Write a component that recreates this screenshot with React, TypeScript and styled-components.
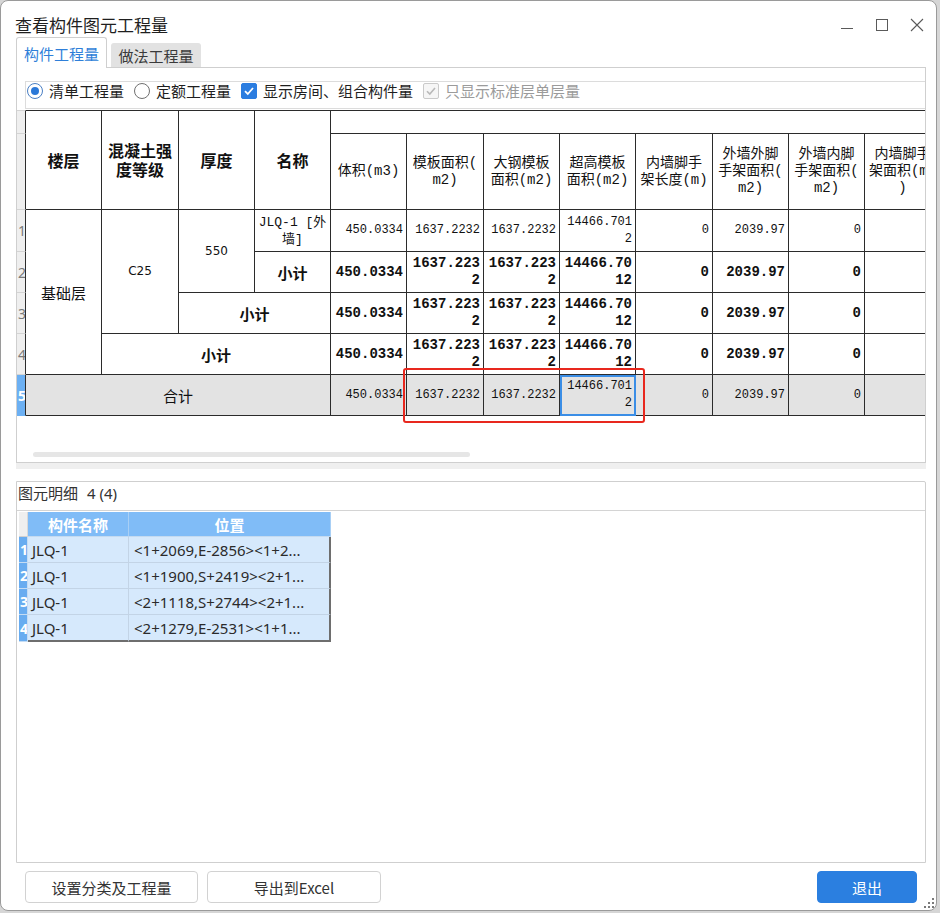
import React from "react";
import styled, { createGlobalStyle, css } from "styled-components";

const UI_FONT = `"Noto Sans CJK SC", "Noto Sans", sans-serif`;
const GRID_FONT = `"Liberation Mono", "Noto Sans CJK SC", monospace`;
const LATIN_FONT = `"Noto Sans", "Noto Sans CJK SC", sans-serif`;
const LINE = "#2b2b2b";

const GlobalStyle = createGlobalStyle`
  html, body { margin: 0; padding: 0; background: #d6d6d6; }
  body { font-family: ${UI_FONT}; }
  *, *::before, *::after { box-sizing: border-box; }
`;

const Window = styled.div`
  position: relative;
  width: 937px;
  height: 911px;
  background: #ffffff;
  border: 1px solid #9a9a9a;
  border-radius: 8px;
  display: flex;
  flex-direction: column;
  overflow: hidden;
  font-family: ${UI_FONT};
`;

const TitleBar = styled.div`
  height: 36px;
  flex: none;
  display: flex;
  align-items: center;
  padding: 12px 2px 0 14px;
`;

const Title = styled.div`
  font-size: 17px;
  line-height: 24px;
  color: #1f1f1f;
`;

const Controls = styled.div`
  margin-left: auto;
  display: flex;
`;

const CtrlButton = styled.div`
  width: 35px;
  height: 24px;
  display: flex;
  align-items: center;
  justify-content: center;
`;

const TabStrip = styled.div`
  height: 30px;
  flex: none;
  display: flex;
  align-items: flex-end;
  padding-left: 15px;
  position: relative;
  z-index: 1;
`;

const Tab = styled.div<{ $active?: boolean }>`
  display: flex;
  align-items: center;
  justify-content: center;
  font-size: 15px;
  border-radius: 3px 3px 0 0;
  ${(p) =>
    p.$active
      ? css`
          width: 91px;
          height: 31px;
          margin-bottom: -1px;
          background: #ffffff;
          border: 1px solid #cfcfcf;
          border-bottom: none;
          color: #2f7fd9;
        `
      : css`
          width: 90px;
          height: 24px;
          margin-left: 4px;
          background: #e2e2e2;
          color: #3a3a3a;
        `}
`;

const UpperPanel = styled.div`
  flex: none;
  height: 396px;
  margin: 0 10px 0 15px;
  border: 1px solid #cfcfcf;
  padding-top: 13px;
  display: flex;
  flex-direction: column;
`;

const Toolbar = styled.div`
  flex: none;
  height: 28px;
  margin-left: 8px;
  border: 1px solid #dcdcdc;
  border-right: none;
  padding-left: 1px;
  display: flex;
  align-items: flex-start;
`;

const Option = styled.label<{ $disabled?: boolean }>`
  display: flex;
  align-items: center;
  gap: 6px;
  height: 18px;
  margin-right: 10px;
  font-size: 15px;
  line-height: 18px;
  color: ${(p) => (p.$disabled ? "#9b9b9b" : "#1f1f1f")};
  white-space: nowrap;
`;

const RadioMark = styled.span<{ $checked?: boolean }>`
  width: 16px;
  height: 16px;
  border-radius: 50%;
  border: 1px solid ${(p) => (p.$checked ? "#4a7fc4" : "#707070")};
  background: #ffffff;
  display: flex;
  align-items: center;
  justify-content: center;
  &::after {
    content: "";
    width: 8px;
    height: 8px;
    border-radius: 50%;
    background: ${(p) => (p.$checked ? "#2a78d8" : "transparent")};
  }
`;

const CheckMark = styled.span<{ $disabled?: boolean }>`
  width: 16px;
  height: 16px;
  border-radius: 2px;
  display: flex;
  align-items: center;
  justify-content: center;
  background: ${(p) => (p.$disabled ? "#f6f6f6" : "#2b7de0")};
  border: 1px solid ${(p) => (p.$disabled ? "#cacaca" : "#2b7de0")};
`;

const GridArea = styled.div`
  flex: 1;
  display: flex;
  flex-direction: column;
  padding-top: 1px;
  min-height: 0;
`;

const TableClip = styled.div`
  flex: none;
  width: 100%;
  overflow: hidden;
`;

const GridTable = styled.table`
  border-collapse: separate;
  border-spacing: 0;
  table-layout: fixed;
  width: 924px;
`;

const GridRow = styled.tr<{ $h: number }>`
  height: ${(p) => p.$h}px;
`;

const RowHead = styled.td<{ $selected?: boolean; $top?: boolean }>`
  padding: 0 0 0 1px;
  background: ${(p) => (p.$selected ? "#6cb0f3" : "#efefef")};
  border-right: 1px solid ${LINE};
  border-bottom: 1px solid ${(p) => (p.$selected ? "#6cb0f3" : "#d4d4d4")};
  border-top: ${(p) => (p.$top ? "1px solid #d4d4d4" : "none")};
  color: ${(p) => (p.$selected ? "#ffffff" : "#7a7a7a")};
  font-family: ${LATIN_FONT};
  font-size: 14px;
  font-weight: ${(p) => (p.$selected ? 700 : 400)};
  vertical-align: middle;
  overflow: hidden;
`;

const HeadCell = styled.th<{ $bold?: boolean; $top?: boolean }>`
  border-right: 1px solid ${LINE};
  border-bottom: 1px solid ${LINE};
  border-top: ${(p) => (p.$top ? `1px solid ${LINE}` : "none")};
  padding: 0 2px;
  text-align: center;
  vertical-align: middle;
  font-family: ${(p) => (p.$bold ? UI_FONT : GRID_FONT)};
  font-size: ${(p) => (p.$bold ? "16px" : "14px")};
  font-weight: ${(p) => (p.$bold ? 700 : 400)};
  line-height: ${(p) => (p.$bold ? "19px" : "17px")};
  color: #111111;
  white-space: nowrap;
  overflow: hidden;
`;

const Line = styled.span`
  display: block;
`;

type Kind = "num" | "numBold" | "label" | "labelBold" | "code" | "name";

const kindStyles: Record<Kind, ReturnType<typeof css>> = {
  num: css`
    font-family: ${GRID_FONT};
    font-size: 12px;
    text-align: right;
  `,
  numBold: css`
    font-family: ${GRID_FONT};
    font-size: 14px;
    font-weight: 700;
    text-align: right;
  `,
  label: css`
    font-family: ${UI_FONT};
    font-size: 15px;
    text-align: center;
  `,
  labelBold: css`
    font-family: ${UI_FONT};
    font-size: 15px;
    font-weight: 700;
    text-align: center;
  `,
  code: css`
    font-family: "DejaVu Sans", sans-serif;
    font-size: 12px;
    text-align: center;
  `,
  name: css`
    font-family: ${GRID_FONT};
    font-size: 13px;
    text-align: center;
  `,
};

const DataCell = styled.td<{ $kind: Kind; $total?: boolean; $selected?: boolean }>`
  border-right: 1px solid ${LINE};
  border-bottom: 1px solid ${LINE};
  padding: 0 3px;
  vertical-align: middle;
  line-height: 17px;
  color: #111111;
  word-break: break-all;
  overflow: hidden;
  background: ${(p) => (p.$total ? "#e3e3e3" : "#ffffff")};
  ${(p) => kindStyles[p.$kind]}
  ${(p) =>
    p.$selected &&
    css`
      outline: 2px solid #3b8ee6;
      outline-offset: -2px;
    `}
`;

const Spacer = styled.div`
  flex: 1;
`;

const ScrollThumb = styled.div`
  flex: none;
  width: 437px;
  height: 5px;
  margin: 0 0 5px 16px;
  border-radius: 3px;
  background: #e6e6e6;
`;

const Splitter = styled.div`
  flex: none;
  height: 6px;
  margin: 0 10px 0 15px;
  background: #efefef;
`;

const Gap = styled.div`
  flex: none;
  height: 12px;
`;

const LowerPanel = styled.div`
  flex: none;
  height: 382px;
  margin: 0 10px 0 15px;
  border: 1px solid #cfcfcf;
  border-radius: 0 2px 0 0;
  display: flex;
  flex-direction: column;
`;

const PanelLabel = styled.div`
  flex: none;
  height: 29px;
  padding: 1px 0 0 1px;
  border-bottom: 1px solid #d4d4d4;
  font-size: 15px;
  line-height: 20px;
  color: #333333;
  display: flex;
`;

const LabelCount = styled.span`
  margin-left: 9px;
  font-family: ${LATIN_FONT};
`;

const DetailTable = styled.table`
  margin: 1px 0 0 2px;
  border-collapse: separate;
  border-spacing: 0;
  table-layout: fixed;
  width: 312px;
`;

const DetailRow = styled.tr<{ $h: number }>`
  height: ${(p) => p.$h}px;
`;

const DetailCorner = styled.td`
  background: #efefef;
  border-right: 1px solid #d9d9d9;
  border-bottom: 1px solid #d0d0d0;
  padding: 0;
`;

const DetailHead = styled.th`
  background: #80bcf7;
  border-right: 1px solid #a8cff5;
  border-bottom: 1px solid #c4daf0;
  color: #ffffff;
  font-size: 15px;
  font-weight: 700;
  text-align: center;
  vertical-align: middle;
  padding: 0;
`;

const DetailRowHead = styled.td`
  background: #68acf0;
  border-right: 1px solid #c5dcf3;
  border-bottom: 1px solid #c5dcf3;
  color: #ffffff;
  font-family: ${LATIN_FONT};
  font-size: 14px;
  font-weight: 700;
  padding: 0 0 0 1px;
  vertical-align: middle;
  overflow: hidden;
`;

const DetailCell = styled.td<{ $lastCol?: boolean; $lastRow?: boolean; $pad: number }>`
  background: #d6e9fc;
  border-right: ${(p) => (p.$lastCol ? "2px solid #6e6e6e" : "1px solid #c3d4e6")};
  border-bottom: ${(p) => (p.$lastRow ? "2px solid #6e6e6e" : "1px solid #c3d4e6")};
  padding: 0 0 0 ${(p) => p.$pad}px;
  color: #2b2b2b;
  font-family: ${LATIN_FONT};
  font-size: 15px;
  white-space: nowrap;
  overflow: hidden;
  vertical-align: middle;
`;

const Footer = styled.div`
  flex: none;
  height: 47px;
  padding: 8px 19px 0 24px;
  display: flex;
  align-items: flex-start;
  gap: 9px;
`;

const Button = styled.button<{ $primary?: boolean; $w: number }>`
  width: ${(p) => p.$w}px;
  height: 32px;
  border-radius: 4px;
  font-family: ${UI_FONT};
  font-size: 15px;
  padding: 0;
  ${(p) =>
    p.$primary
      ? css`
          margin-left: auto;
          background: #2b7fe0;
          border: 1px solid #2b7fe0;
          color: #ffffff;
        `
      : css`
          background: #ffffff;
          border: 1px solid #d2d2d2;
          color: #333333;
        `}
`;

const Annotation = styled.div`
  position: absolute;
  left: 402px;
  top: 367px;
  width: 242px;
  height: 55px;
  border: 2px solid #e8281e;
  border-radius: 3px;
  pointer-events: none;
`;

const Grip = styled.svg`
  position: absolute;
  right: 2px;
  bottom: 2px;
`;

const colWidths = [9, 76, 77, 76, 76, 76, 77, 76, 76, 77, 76, 76, 76];

const dataHeaders: string[][] = [
  ["体积(m3)"],
  ["模板面积(", "m2)"],
  ["大钢模板", "面积(m2)"],
  ["超高模板", "面积(m2)"],
  ["内墙脚手", "架长度(m)"],
  ["外墙外脚", "手架面积(", "m2)"],
  ["外墙内脚", "手架面积(", "m2)"],
  ["内墙脚手", "架面积(m2", ")"],
];

const values = ["450.0334", "1637.2232", "1637.2232", "14466.7012", "0", "2039.97", "0", ""];

const details = [
  ["JLQ-1", "<1+2069,E-2856><1+2..."],
  ["JLQ-1", "<1+1900,S+2419><2+1..."],
  ["JLQ-1", "<2+1118,S+2744><2+1..."],
  ["JLQ-1", "<2+1279,E-2531><1+1..."],
];

const Numbers: React.FC<{ bold?: boolean; total?: boolean; selectedIndex?: number }> = ({
  bold,
  total,
  selectedIndex,
}) => (
  <>
    {values.map((v, i) => (
      <DataCell key={i} $kind={bold ? "numBold" : "num"} $total={total} $selected={selectedIndex === i}>
        {v}
      </DataCell>
    ))}
  </>
);

export default function App() {
  return (
    <>
      <GlobalStyle />
      <Window>
        <TitleBar>
          <Title>查看构件图元工程量</Title>
          <Controls>
            <CtrlButton>
              <svg width="14" height="14" viewBox="0 0 14 14">
                <line x1="1" y1="10.5" x2="13" y2="10.5" stroke="#5a5a5a" strokeWidth="1" />
              </svg>
            </CtrlButton>
            <CtrlButton>
              <svg width="14" height="14" viewBox="0 0 14 14">
                <rect x="1.5" y="1.5" width="11" height="11" fill="none" stroke="#5a5a5a" strokeWidth="1" />
              </svg>
            </CtrlButton>
            <CtrlButton>
              <svg width="14" height="14" viewBox="0 0 14 14">
                <path d="M1 1 L13 13 M13 1 L1 13" stroke="#5a5a5a" strokeWidth="1.1" fill="none" />
              </svg>
            </CtrlButton>
          </Controls>
        </TitleBar>

        <TabStrip>
          <Tab $active>构件工程量</Tab>
          <Tab>做法工程量</Tab>
        </TabStrip>

        <UpperPanel>
          <Toolbar>
            <Option>
              <RadioMark $checked />
              清单工程量
            </Option>
            <Option>
              <RadioMark />
              定额工程量
            </Option>
            <Option>
              <CheckMark>
                <svg width="12" height="12" viewBox="0 0 12 12">
                  <path d="M2 6.2 L4.8 9 L10 3" stroke="#ffffff" strokeWidth="1.8" fill="none" />
                </svg>
              </CheckMark>
              显示房间、组合构件量
            </Option>
            <Option $disabled>
              <CheckMark $disabled>
                <svg width="12" height="12" viewBox="0 0 12 12">
                  <path d="M2 6.2 L4.8 9 L10 3" stroke="#b9b9b9" strokeWidth="1.6" fill="none" />
                </svg>
              </CheckMark>
              只显示标准层单层量
            </Option>
          </Toolbar>

          <GridArea>
            <TableClip>
              <GridTable>
                <colgroup>
                  {colWidths.map((w, i) => (
                    <col key={i} style={{ width: w }} />
                  ))}
                </colgroup>
                <thead>
                  <GridRow $h={24}>
                    <RowHead $top />
                    <HeadCell $bold $top rowSpan={2}>
                      楼层
                    </HeadCell>
                    <HeadCell $bold $top rowSpan={2}>
                      <Line>混凝土强</Line>
                      <Line>度等级</Line>
                    </HeadCell>
                    <HeadCell $bold $top rowSpan={2}>
                      厚度
                    </HeadCell>
                    <HeadCell $bold $top rowSpan={2}>
                      名称
                    </HeadCell>
                    <HeadCell $top colSpan={8} />
                  </GridRow>
                  <GridRow $h={76}>
                    <RowHead />
                    {dataHeaders.map((lines, i) => (
                      <HeadCell key={i}>
                        {lines.map((l, j) => (
                          <Line key={j}>{l}</Line>
                        ))}
                      </HeadCell>
                    ))}
                  </GridRow>
                </thead>
                <tbody>
                  <GridRow $h={42}>
                    <RowHead>1</RowHead>
                    <DataCell $kind="label" rowSpan={4}>
                      基础层
                    </DataCell>
                    <DataCell $kind="code" rowSpan={3}>
                      C25
                    </DataCell>
                    <DataCell $kind="code" rowSpan={2}>
                      550
                    </DataCell>
                    <DataCell $kind="name">
                      <Line>JLQ-1 [外</Line>
                      <Line>墙]</Line>
                    </DataCell>
                    <Numbers />
                  </GridRow>
                  <GridRow $h={41}>
                    <RowHead>2</RowHead>
                    <DataCell $kind="labelBold">小计</DataCell>
                    <Numbers bold />
                  </GridRow>
                  <GridRow $h={41}>
                    <RowHead>3</RowHead>
                    <DataCell $kind="labelBold" colSpan={2}>
                      小计
                    </DataCell>
                    <Numbers bold />
                  </GridRow>
                  <GridRow $h={41}>
                    <RowHead>4</RowHead>
                    <DataCell $kind="labelBold" colSpan={3}>
                      小计
                    </DataCell>
                    <Numbers bold />
                  </GridRow>
                  <GridRow $h={41}>
                    <RowHead $selected>5</RowHead>
                    <DataCell $kind="label" $total colSpan={4}>
                      合计
                    </DataCell>
                    <Numbers total selectedIndex={3} />
                  </GridRow>
                </tbody>
              </GridTable>
            </TableClip>
            <Spacer />
            <ScrollThumb />
          </GridArea>
        </UpperPanel>

        <Splitter />
        <Gap />

        <LowerPanel>
          <PanelLabel>
            图元明细<LabelCount>4 (4)</LabelCount>
          </PanelLabel>
          <DetailTable>
            <colgroup>
              <col style={{ width: 9 }} />
              <col style={{ width: 101 }} />
              <col style={{ width: 202 }} />
            </colgroup>
            <thead>
              <DetailRow $h={25}>
                <DetailCorner />
                <DetailHead>构件名称</DetailHead>
                <DetailHead>位置</DetailHead>
              </DetailRow>
            </thead>
            <tbody>
              {details.map((d, i) => {
                const last = i === details.length - 1;
                return (
                  <DetailRow key={i} $h={last ? 27 : 26}>
                    <DetailRowHead>{i + 1}</DetailRowHead>
                    <DetailCell $pad={4} $lastRow={last}>
                      {d[0]}
                    </DetailCell>
                    <DetailCell $pad={5} $lastRow={last} $lastCol>
                      {d[1]}
                    </DetailCell>
                  </DetailRow>
                );
              })}
            </tbody>
          </DetailTable>
        </LowerPanel>

        <Footer>
          <Button $w={173}>设置分类及工程量</Button>
          <Button $w={174}>导出到Excel</Button>
          <Button $primary $w={100}>
            退出
          </Button>
        </Footer>

        <Annotation />
        <Grip width="10" height="10" viewBox="0 0 10 10">
          <g fill="#7a7a7a">
            <rect x="8" y="0" width="2" height="2" />
            <rect x="4" y="4" width="2" height="2" />
            <rect x="8" y="4" width="2" height="2" />
            <rect x="0" y="8" width="2" height="2" />
            <rect x="4" y="8" width="2" height="2" />
            <rect x="8" y="8" width="2" height="2" />
          </g>
        </Grip>
      </Window>
    </>
  );
}
